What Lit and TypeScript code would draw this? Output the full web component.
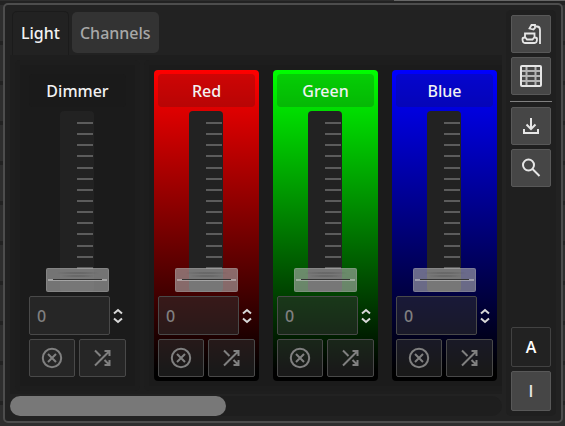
import { LitElement, html, css, svg } from "lit";
import { customElement, property } from "lit/decorators.js";
import { classMap } from "lit/directives/class-map.js";

const lamp = svg`<g stroke-width="1.800"><path d="M16.500 4.500H18q3 0 3 3.500V22"/><path d="M10.500 6.500L12.500 3h3.500v3l-1.500 1.500z"/><path d="M6 11.500h9.500v3.500l-2 2.500H8l-2-2.500z"/><path d="M6 15.500q-2.500 0-2.500 1.500c0 2 .5 4 2.500 4h9.500c2 0 2.500-2 2.500-4q0-1.500-2.500-1.500"/></g>`;
const sheet = svg`<path d="M7.500 2v20M16.500 2v20M2 7h20M2 12h20M2 17h20" stroke="#b4b4b4"/><rect x="2" y="2" width="20" height="20" rx="1"/>`;
const download = svg`<path d="M12 4v11M7.500 10.500L12 15l4.500-4.500M5 15v4h14v-4"/>`;
const search = svg`<circle cx="9.500" cy="9" r="5.500"/><path d="M13.500 13L20.500 20"/>`;

@customElement("channel-fader")
export class ChannelFader extends LitElement {
  @property() label = "";
  @property({ reflect: true }) tone = "none";

  static styles = css`
    :host {
      display: flex;
      flex-direction: column;
      flex: none;
      width: 97px;
      padding: 4px;
      gap: 4px;
      border-radius: 4px;
    }
    :host([tone="red"]) { background: linear-gradient(#f00, #000 97%); }
    :host([tone="green"]) { background: linear-gradient(#0f0, #000 97%); }
    :host([tone="blue"]) { background: linear-gradient(#00f, #000 97%); }
    .name {
      height: 33px;
      line-height: 34px;
      border-radius: 4px;
      text-align: center;
      font-weight: 500;
      color: #f2f2f2;
      background: rgba(24, 24, 24, 0.2);
    }
    .slider {
      flex: 1;
      min-height: 80px;
      display: grid;
      grid-template: minmax(0, 1fr) / 1fr;
      justify-items: center;
    }
    .track {
      grid-area: 1 / 1;
      width: 34px;
      margin-right: 2px;
      box-sizing: border-box;
      border-radius: 4px;
      background: #222;
      padding: 11px 1px 23px 17px;
      display: flex;
      flex-direction: column;
      justify-content: space-between;
    }
    .tick { height: 2px; background: #5c5c5c; }
    .range {
      grid-area: 1 / 1;
      appearance: none;
      writing-mode: vertical-lr;
      direction: rtl;
      width: 63px;
      height: 100%;
      margin: 0;
      background: none;
    }
    .range::-webkit-slider-runnable-track { width: 63px; height: 100%; }
    .range::-webkit-slider-thumb {
      appearance: none;
      width: 63px;
      height: 24px;
      box-sizing: border-box;
      border: 1px solid rgba(200, 200, 200, 0.2);
      border-radius: 2px;
      background:
        linear-gradient(#333, #333) 50% 10px / 49px 1px no-repeat,
        linear-gradient(rgba(210, 210, 210, 0.5), rgba(210, 210, 210, 0.5)) 50% 10px / 59px 2px no-repeat,
        radial-gradient(closest-side, rgba(60, 60, 60, 0.5), transparent) 50% 3px / 50px 2px no-repeat,
        radial-gradient(closest-side, rgba(60, 60, 60, 0.5), transparent) 50% 6px / 40px 2px no-repeat,
        rgba(177, 177, 177, 0.6);
    }
    .value { display: flex; height: 39px; }
    .number {
      flex: 1;
      min-width: 0;
      box-sizing: border-box;
      padding: 0 7px;
      font: inherit;
      font-weight: 500;
      color: #808080;
    }
    .number,
    .action {
      border: 1px solid #494949;
      border-radius: 2px;
      background: rgba(50, 50, 50, 0.5);
    }
    .steps {
      width: 16px;
      display: flex;
      flex-direction: column;
      align-items: center;
      justify-content: center;
      gap: 2px;
    }
    .step {
      display: block;
      width: 10px;
      height: 7px;
      padding: 0;
      border: 0;
      background: none;
      color: #d8d8d8;
    }
    svg { display: block; fill: none; stroke: currentColor; stroke-width: 2; }
    .actions { display: grid; grid-template-columns: 46px 1fr; gap: 4px; height: 38px; }
    .action {
      padding: 0;
      display: grid;
      place-items: center;
      color: #808080;
    }
  `;

  render() {
    return html`
      <div class="name">${this.label}</div>
      <div class="slider">
        <div class="track">${Array.from({ length: 14 }, () => html`<div class="tick"></div>`)}</div>
        <input class="range" type="range" min="0" max="255" value="0" aria-label=${this.label} />
      </div>
      <div class="value">
        <input class="number" type="text" inputmode="numeric" value="0" aria-label="${this.label} value" />
        <div class="steps">
          <button class="step" aria-label="Increase"><svg width="10" height="7" viewBox="0 0 10 7"><path d="M1 5.500L5 2l4 3.500" /></svg></button>
          <button class="step" aria-label="Decrease"><svg width="10" height="7" viewBox="0 0 10 7"><path d="M1 1.500L5 5l4-3.500" /></svg></button>
        </div>
      </div>
      <div class="actions">
        <button class="action" aria-label="Clear">
          <svg width="24" height="24" viewBox="0 0 24 24"><circle cx="12" cy="12" r="9.200" /><path d="M8 8l8 8M16 8l-8 8" /></svg>
        </button>
        <button class="action" aria-label="Randomize">
          <svg width="24" height="24" viewBox="0 0 24 24"><path d="M4 4.500L9.500 10M4 19.500L18.500 5M13.500 14l5 5M13.500 5h5v5M13.500 19h5v-5" /></svg>
        </button>
      </div>
    `;
  }
}

@customElement("app-root")
export class AppRoot extends LitElement {
  static styles = css`
    :host {
      display: flex;
      box-sizing: border-box;
      min-height: 100vh;
      padding: 3px 2px 3px 3px;
      background:
        linear-gradient(#666, #666) 394px 0 / 100% 1px no-repeat,
        repeating-linear-gradient(transparent 0 1px, #222 1px 5px, transparent 5px 40px),
        #2e2e2e;
      font: 16px/24px "Noto Sans", "Open Sans", sans-serif;
      color: #f2f2f2;
    }
    .window {
      flex: 1;
      min-width: 0;
      display: flex;
      gap: 4px;
      padding: 5px;
      border: 2px solid #4d4d4d;
      border-radius: 5px;
      background: #222;
    }
    .main { flex: 1; min-width: 0; display: flex; flex-direction: column; }
    .tabs { display: flex; gap: 3px; height: 45px; padding: 1px 2px 0; box-sizing: border-box; }
    .tab {
      height: 41px;
      margin-top: 1px;
      padding: 0 8px;
      border: 0;
      border-radius: 5px;
      font: inherit;
      font-weight: 500;
      color: #a8a8a8;
      background: #333;
    }
    .tab.current {
      height: 44px;
      margin-top: 0;
      padding: 0 8px 2px;
      border: 1px solid #1b1b1b;
      border-bottom: 0;
      border-radius: 5px 5px 0 0;
      color: #f2f2f2;
      background: #222;
    }
    .board { flex: 1; display: flex; gap: 4px; padding: 5px 0 3px 5px; overflow: hidden; background: #1e1e1e; }
    .group {
      flex: none;
      display: flex;
      gap: 14px;
      padding: 5px;
      border: 5px solid #1d1d1d;
      border-radius: 5px;
      background: #1b1b1b;
    }
    .scroll { height: 20px; margin-top: 2px; border-radius: 10px; background: #1e1e1e; }
    .thumb { width: 44%; height: 100%; border-radius: 10px; background: #787878; }
    .side {
      display: flex;
      flex-direction: column;
      gap: 4px;
      width: 42px;
      padding: 5px 4px;
      border-radius: 5px;
      background: #1f1f1f;
    }
    .tool {
      height: 38px;
      margin: 0 1px;
      padding: 0;
      display: grid;
      place-items: center;
      border: 1px solid #585858;
      border-radius: 2px;
      background: #464646;
      color: #e6e6e6;
    }
    .tool svg { display: block; fill: none; stroke: currentColor; stroke-width: 2; }
    .mode { height: 40px; font: 600 16px/24px "Open Sans", sans-serif; }
    .pressed { background: #222; border-color: #424242; color: #fff; }
    .rule { width: 100%; height: 1px; margin: 2px 0 1px; border: 0; background: #808080; }
    .spacer { flex: 1; }
  `;

  private tool(name: string, icon: unknown) {
    return html`<button class="tool" aria-label=${name}>
      <svg width="24" height="24" viewBox="0 0 24 24">${icon}</svg>
    </button>`;
  }

  private mode(letter: string, pressed: boolean) {
    return html`<button class=${classMap({ tool: true, mode: true, pressed })} aria-pressed=${pressed}>${letter}</button>`;
  }

  render() {
    return html`
      <div class="window">
        <div class="main">
          <div class="tabs" role="tablist">
            <button class="tab current" role="tab" aria-selected="true">Light</button>
            <button class="tab" role="tab" aria-selected="false">Channels</button>
          </div>
          <div class="board">
            <div class="group"><channel-fader label="Dimmer"></channel-fader></div>
            <div class="group">
              <channel-fader label="Red" tone="red"></channel-fader>
              <channel-fader label="Green" tone="green"></channel-fader>
              <channel-fader label="Blue" tone="blue"></channel-fader>
            </div>
          </div>
          <div class="scroll"><div class="thumb"></div></div>
        </div>
        <div class="side">
          ${this.tool("Lamp", lamp)} ${this.tool("Sheet", sheet)}
          <hr class="rule" />
          ${this.tool("Download", download)} ${this.tool("Search", search)}
          <div class="spacer"></div>
          ${this.mode("A", true)} ${this.mode("I", false)}
        </div>
      </div>
    `;
  }
}
